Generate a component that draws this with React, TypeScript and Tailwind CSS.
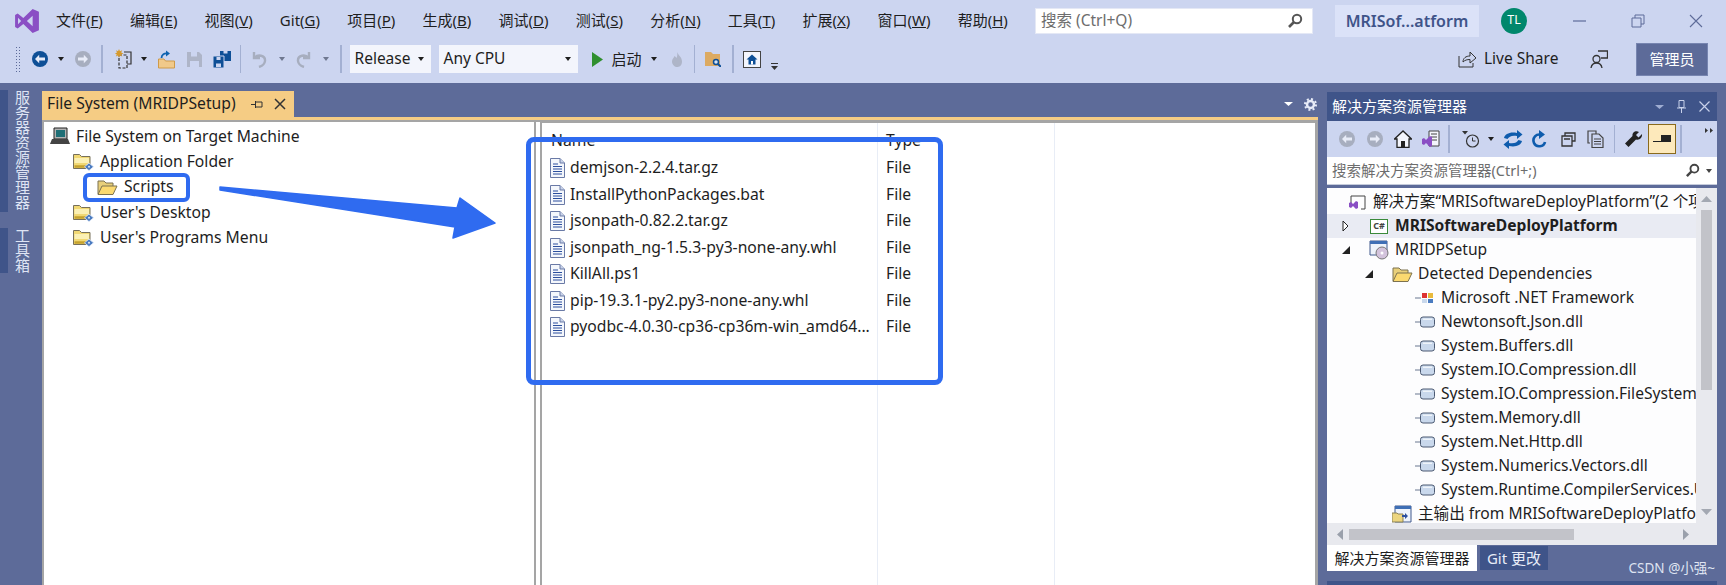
import React from "react";

function Caret({ color = "#1e1e1e", w = 7 }: { color?: string; w?: number }) {
  return (
    <svg width={w} height={4} viewBox="0 0 7 4" preserveAspectRatio="none" className="shrink-0">
      <path d="M0 0h7L3.500 4z" fill={color} />
    </svg>
  );
}

function Sep({ h = 28 }: { h?: number }) {
  return <div className="w-[1.500px] shrink-0 bg-[#a3b0d2]" style={{ height: h }} />;
}

function CircleArrow({ fill, dir = "left" }: { fill: string; dir?: "left" | "right" }) {
  return (
    <svg width={16} height={16} viewBox="0 0 16 16" className="shrink-0">
      <circle cx="8" cy="8" r="8" fill={fill} />
      {dir === "left" ? (
        <path d="M3 8l4.200-4.200v2.700H13v3H7.200v2.700z" fill="#e8ecf8" />
      ) : (
        <path d="M13 8L8.800 3.800v2.700H3v3h5.800v2.700z" fill="#e8ecf8" />
      )}
    </svg>
  );
}

function VsLogo({ size = 26 }: { size?: number }) {
  return (
    <svg width={size} height={size} viewBox="0 0 24 24">
      <path
        d="M17.200 1L23 3.400v17.200L17.200 23l-8.600-8.200L3.400 18.900 1 17.600V6.400l2.400-1.300 5.200 4.100zM17.200 7.200l-5.300 4.800 5.300 4.800zM3.700 9v6l2.900-3z"
        fill="#8a4fc4"
      />
    </svg>
  );
}

function FolderClosed() {
  return (
    <svg width={21} height={19} viewBox="0 0 21 19" className="shrink-0">
      <path d="M.5 2.500h6l2 2h8.500v12H.5z" fill="#f1d873" stroke="#77705a" />
      <path d="M1.500 6h14.500v5H1.500z" fill="#fbf0b4" />
      <path d="M1.500 14.500h14.500" stroke="#c5a22e" strokeWidth="2.500" />
      <path d="M16 11l4.500 3.800L16 18.600l-4.500-3.800z" fill="#4a7bc0" stroke="#e2eaf7" strokeWidth=".8" />
      <circle cx="16" cy="14.800" r="1" fill="#dfe9f7" />
    </svg>
  );
}

function FolderOpen() {
  return (
    <svg width={21} height={17} viewBox="0 0 21 17" className="shrink-0">
      <path d="M1 15V2h6l2 2h7v3" fill="#e8cf7a" stroke="#7c7250" />
      <path d="M1 15.500L5 7h15l-4 8.500z" fill="#fbd970" stroke="#7c7250" />
    </svg>
  );
}

function FileIcon() {
  return (
    <svg width={15} height={20} viewBox="0 0 15 20" className="shrink-0">
      <path d="M.5.500h9.500l4.500 4.500v14.500H.5z" fill="#f4f7fc" stroke="#6a7aa6" />
      <path d="M10 .5V5h4.500" fill="#c8d3ea" stroke="#6a7aa6" />
      <path d="M3 6h5M3 8.500h9M3 11h9M3 13.500h9M3 16h9" stroke="#2c4f9e" />
    </svg>
  );
}

function DllIcon() {
  return (
    <svg width={20} height={12} viewBox="0 0 20 12" className="shrink-0">
      <path d="M0 6h6" stroke="#9aa3b5" strokeWidth="1.500" />
      <rect x="5.500" y="1" width="14" height="10" rx="2.500" fill="#c9d8ec" stroke="#4c5a72" />
      <path d="M8 3.200h9" stroke="#fff" />
    </svg>
  );
}

function TreeRow({ text, indent, iconW, children }: { text: string; indent: number; iconW: number; children: React.ReactNode }) {
  return (
    <div className="flex h-[25.300px] items-center whitespace-nowrap" style={{ paddingLeft: indent }}>
      <div className="flex justify-start" style={{ width: iconW }}>
        {children}
      </div>
      <span>{text}</span>
    </div>
  );
}

function SolRow({ indent, text, bold, selected, arrow, children }: { indent: number; text: string; bold?: boolean; selected?: boolean; arrow?: "open" | "down"; children: React.ReactNode }) {
  return (
    <div className={`relative flex h-[24px] items-center whitespace-nowrap ${selected ? "bg-[#e9ebf3]" : ""} ${bold ? "font-bold" : ""}`} style={{ paddingLeft: indent }}>
      {arrow === "open" && (
        <svg width={7} height={12} viewBox="0 0 7 12" className="absolute" style={{ left: indent - 27 }}>
          <path d="M1 1l5 5-5 5z" fill="#fff" stroke="#222" />
        </svg>
      )}
      {arrow === "down" && (
        <svg width={8} height={8} viewBox="0 0 8 8" className="absolute" style={{ left: indent - 27 }}>
          <path d="M8 0v8H0z" fill="#222" />
        </svg>
      )}
      <div className="mr-[6px] flex w-[20px] shrink-0 justify-center">{children}</div>
      {text}
    </div>
  );
}

function MenuBar() {
  const items = ["文件(F)", "编辑(E)", "视图(V)", "Git(G)", "项目(P)", "生成(B)", "调试(D)", "测试(S)", "分析(N)", "工具(T)", "扩展(X)", "窗口(W)", "帮助(H)"];
  return (
    <div className="flex h-[41px] items-center">
      <div className="ml-[14px] w-[42px]">
        <VsLogo />
      </div>
      <div className="flex w-[979px] gap-[27.200px] text-[15px] text-[#1e1e1e]">
        {items.map((m) => {
          const i = m.indexOf("(");
          return (
            <span key={m} className="whitespace-nowrap">
              {m.slice(0, i)}({<span className="underline">{m[i + 1]}</span>})
            </span>
          );
        })}
      </div>
      <div className="flex h-[26px] w-[278px] items-center justify-between border border-[#e4e8f5] bg-white pr-[9px] pl-[5px] text-[15.500px] text-[#6d6d6d]">
        <span>搜索 (Ctrl+Q)</span>
        <svg width={16} height={16} viewBox="0 0 16 16">
          <circle cx="10" cy="6" r="4.200" fill="none" stroke="#555" strokeWidth="2" />
          <path d="M7 9l-5 5" stroke="#555" strokeWidth="2.600" />
        </svg>
      </div>
      <div className="ml-[22px] flex h-[32px] w-[144px] items-center justify-center bg-[#dbe2f8] text-[16px] font-semibold text-[#3f5489]">
        MRISof...atform
      </div>
      <div className="ml-[22px] flex h-[26px] w-[26px] items-center justify-center rounded-full bg-[#00876c] text-[12.500px] text-white">
        TL
      </div>
      <svg width={14} height={14} viewBox="0 0 14 14" className="ml-[46px]">
        <path d="M0 7h13" stroke="#5d6b99" strokeWidth="1.200" />
      </svg>
      <svg width={14} height={14} viewBox="0 0 14 14" className="ml-[44px]">
        <path d="M1 4h9v9H1zM4 4V1h9v9h-3" fill="none" stroke="#5d6b99" />
      </svg>
      <svg width={14} height={14} viewBox="0 0 14 14" className="ml-[44px]">
        <path d="M1 1l12 12M13 1L1 13" stroke="#5d6b99" strokeWidth="1.100" />
      </svg>
    </div>
  );
}

function ToolBar() {
  return (
    <div className="flex h-[36px] items-center text-[15.500px] text-[#1e1e1e]">
      <div className="ml-[15px] h-[26px] w-[6px] bg-[radial-gradient(#5d6b99_1px,transparent_1px)] bg-[length:3px_3px]" />
      <div className="ml-[11px]">
        <CircleArrow fill="#0e4f96" />
      </div>
      <div className="ml-[10px]">
        <Caret w={6} />
      </div>
      <div className="ml-[11px]">
        <CircleArrow fill="#a7aebf" dir="right" />
      </div>
      <div className="ml-[10px]">
        <Sep />
      </div>
      <svg width={17} height={20} viewBox="0 0 17 20" className="ml-[12px]">
        <path d="M4 6h8v13H4z" fill="none" stroke="#333" strokeDasharray="3 1.500" strokeWidth="1.200" />
        <path d="M9 3h7v12h-4" fill="none" stroke="#333" strokeWidth="1.200" />
        <path d="M4 0l1 2.200 2.200-1-1 2.200 2.200 1-2.200 1 1 2.200-2.200-1L4 8.800 3 6.600.800 7.600l1-2.200L0 4.400l2-1-1-2.200 2 1z" fill="#d69a2d" />
      </svg>
      <div className="ml-[9px]">
        <Caret w={6} />
      </div>
      <svg width={17} height={19} viewBox="0 0 17 19" className="ml-[11px]">
        <path d="M.5 9h5.500l1.500 2h9v7H.5z" fill="#f0c98a" stroke="#cf9a48" />
        <path d="M3.500 8c0-3.500 3-5 6-4.500" fill="none" stroke="#0e63b0" strokeWidth="1.800" />
        <path d="M8 .5l4 3-4 3z" fill="#0e63b0" />
      </svg>
      <svg width={15} height={15} viewBox="0 0 15 15" className="ml-[12px]">
        <path d="M0 0h12l3 3v12H0z" fill="#aeb5c8" />
        <path d="M4 0h6v4.500H4zM3 9h9v6H3z" fill="#ccd5f0" />
      </svg>
      <svg width={18} height={17} viewBox="0 0 18 17" className="ml-[11px]">
        <path d="M7 0h11v10H7z" fill="#0e4f96" />
        <path d="M0 5h11v12H0z" fill="#0e4f96" stroke="#ccd5f0" />
        <path d="M3.500 6h4v3h-4zM3 12.500h5V16H3zM10.500 0h4v2.500h-4z" fill="#ccd5f0" />
      </svg>
      <div className="ml-[9px]">
        <Sep />
      </div>
      <svg width={15} height={17} viewBox="0 0 15 17" className="ml-[11px]">
        <path d="M2 1v6h6M2.500 7c3-4 11-3 10.500 3-.3 3-3 5-6 6" fill="none" stroke="#a7aebf" strokeWidth="2.400" />
      </svg>
      <div className="ml-[12px]">
        <Caret w={6} color="#6f7890" />
      </div>
      <svg width={15} height={17} viewBox="0 0 15 17" className="ml-[11px]">
        <path d="M13 1v6H7M12.500 7C9.500 3 1.500 4 2 10c.3 3 3 5 6 6" fill="none" stroke="#a7aebf" strokeWidth="2.400" />
      </svg>
      <div className="ml-[12px]">
        <Caret w={6} color="#6f7890" />
      </div>
      <div className="ml-[11px]">
        <Sep />
      </div>
      <div className="ml-[8px] flex h-[28px] w-[81px] items-center justify-between bg-[#f3f5fc] pr-[7px] pl-[5px]">
        <span>Release</span>
        <Caret w={6} />
      </div>
      <div className="ml-[8px] flex h-[28px] w-[139px] items-center justify-between bg-[#f3f5fc] pr-[7px] pl-[5px]">
        <span>Any CPU</span>
        <Caret w={6} />
      </div>
      <svg width={13} height={15} viewBox="0 0 13 15" className="ml-[13px]">
        <path d="M1 0l11 7.500L1 15z" fill="#2f8f2f" />
      </svg>
      <span className="ml-[8px] text-[15px]">启动</span>
      <div className="ml-[9px]">
        <Caret w={6} />
      </div>
      <svg width={12} height={15} viewBox="0 0 12 15" className="ml-[14px]">
        <path d="M6 0c1 3 5 5 5 9.500S8 15 6 15s-5-2-5-5.500C1 7 3 6 3.500 4 4.500 5 5 5 5.500 6 6.500 4 6.500 2 6 0z" fill="#aeb5c8" />
      </svg>
      <div className="ml-[11px]">
        <Sep />
      </div>
      <svg width={16} height={16} viewBox="0 0 16 16" className="ml-[10px]">
        <path d="M0 1h6l2 2h7v12H0z" fill="#dcaa62" />
        <circle cx="11" cy="11" r="2.500" fill="#d5e3f5" stroke="#0e4f96" strokeWidth="1.500" />
        <path d="M13 13l3 3" stroke="#0e4f96" strokeWidth="2" />
      </svg>
      <div className="ml-[11px]">
        <Sep />
      </div>
      <svg width={18} height={17} viewBox="0 0 18 17" className="ml-[9px]">
        <rect x=".5" y=".5" width="17" height="16" fill="#f3f5fc" stroke="#444" />
        <path d="M9 3.500L3.500 8.500h2v5h7v-5h2z" fill="#0e4f96" />
        <path d="M8 10h2v3.500H8z" fill="#fff" />
      </svg>
      <div className="mt-[14px] ml-[10px] flex flex-col gap-[2px]">
        <div className="h-px w-[7px] bg-[#333]" />
        <Caret w={7} color="#333" />
      </div>
      <div className="flex-1" />
      <svg width={18} height={18} viewBox="0 0 18 18">
        <path d="M1 6v11h14v-4M5 12c0-4 3-6 7-6V2l6 6-6 5V9.500c-3 0-5 .5-7 2.500z" fill="none" stroke="#333" />
      </svg>
      <span className="ml-[8px] w-[73px] whitespace-nowrap">Live Share</span>
      <svg width={18} height={18} viewBox="0 0 18 18" className="ml-[33px]">
        <circle cx="6.500" cy="9" r="3.500" fill="none" stroke="#333" strokeWidth="1.300" />
        <path d="M1 18c.5-3 2.500-5 5.500-5s5 2 5.500 5M8 1h9.500v7H11" fill="none" stroke="#333" strokeWidth="1.300" />
      </svg>
      <div className="mr-[18px] ml-[28px] flex h-[33px] w-[72px] items-center justify-center border border-[#7785b0] bg-[#5d6b99] text-[15px] text-white">
        管理员
      </div>
    </div>
  );
}

function LeftStrip() {
  return (
    <div className="flex w-[42px] shrink-0 pt-[7px]">
      <div className="flex w-[8px] flex-col gap-[16px]">
        <div className="h-[122px] bg-[#3f5489]" />
        <div className="h-[45px] bg-[#3f5489]" />
      </div>
      <div className="ml-[6px] flex flex-col gap-[16px] text-[15px] leading-[16px] text-[#dfe4f4]">
        <div className="h-[122px] whitespace-nowrap [writing-mode:vertical-rl]">服务器资源管理器</div>
        <div className="h-[45px] whitespace-nowrap [writing-mode:vertical-rl]">工具箱</div>
      </div>
    </div>
  );
}

function DocWell() {
  const files = ["demjson-2.2.4.tar.gz", "InstallPythonPackages.bat", "jsonpath-0.82.2.tar.gz", "jsonpath_ng-1.5.3-py3-none-any.whl", "KillAll.ps1", "pip-19.3.1-py2.py3-none-any.whl", "pyodbc-4.0.30-cp36-cp36m-win_amd64..."];
  return (
    <div className="flex w-[1276px] shrink-0 flex-col pt-[8px]">
      <div className="flex items-center justify-between">
        <div className="flex h-[26px] w-[252px] items-center bg-[#f5cc84] pl-[5px] text-[15.700px] text-[#1e1e1e]">
          <span className="whitespace-nowrap">File System (MRIDPSetup)</span>
          <svg width={12} height={9} viewBox="0 0 12 9" className="ml-[15px] shrink-0">
            <path d="M0 4.500h4M4.500 1v7M4.500 2h6.500v5H4.500" fill="none" stroke="#333" />
          </svg>
          <svg width={12} height={12} viewBox="0 0 12 12" className="ml-[11px] shrink-0">
            <path d="M1 1l10 10M11 1L1 11" stroke="#333" strokeWidth="1.500" />
          </svg>
        </div>
        <div className="flex items-center gap-[11px] pr-[1px] text-white">
          <Caret color="#fff" w={9} />
          <svg width={13} height={13} viewBox="0 0 13 13">
            <circle cx="6.500" cy="6.500" r="3.500" fill="none" stroke="#e8ecf8" strokeWidth="2.500" />
            <circle cx="6.500" cy="6.500" r="5.500" fill="none" stroke="#e8ecf8" strokeWidth="2" strokeDasharray="2 2.300" />
          </svg>
        </div>
      </div>
      <div className="h-[3px] bg-[#f5cc84]" />
      <div className="flex flex-1 border-t-[2px] border-l-[2px] border-[#a5a5a5] bg-white text-[15.700px] text-[#1e1e1e]">
        <div className="w-[490px] shrink-0 pt-[2px]">
          <TreeRow text="File System on Target Machine" indent={6} iconW={26}>
            <svg width={20} height={19} viewBox="0 0 20 19">
              <path d="M4 1h13v11H4z" fill="#b4b4b4" stroke="#222" />
              <path d="M6 3h9v7H6z" fill="#1f6f76" />
              <path d="M2 12h16l2 5H0z" fill="#444" />
            </svg>
          </TreeRow>
          <TreeRow text="Application Folder" indent={29} iconW={27}>
            <FolderClosed />
          </TreeRow>
          <TreeRow text="Scripts" indent={53} iconW={27}>
            <FolderOpen />
          </TreeRow>
          <TreeRow text="User's Desktop" indent={29} iconW={27}>
            <FolderClosed />
          </TreeRow>
          <TreeRow text="User's Programs Menu" indent={29} iconW={27}>
            <FolderClosed />
          </TreeRow>
        </div>
        <div className="w-[8px] shrink-0 border-x-[2px] border-[#a5a5a5] bg-white" />
        <div className="flex flex-1 border-t border-[#a5a5a5]">
          <div className="w-[336px] shrink-0 border-r border-[#e8edf6] pl-[8px]">
            <div className="h-[32px] pt-[6px] pl-[1px]">Name</div>
            {files.map((f) => (
              <div key={f} className="flex h-[26.500px] items-center gap-[5px] whitespace-nowrap">
                <FileIcon />
                <span>{f}</span>
              </div>
            ))}
          </div>
          <div className="w-[177px] shrink-0 border-r border-[#e8edf6] pl-[8px]">
            <div className="h-[32px] pt-[6px]">Type</div>
            {files.map((f) => (
              <div key={f} className="flex h-[26.500px] items-center">
                File
              </div>
            ))}
          </div>
          <div className="flex-1 border-r-[3px] border-[#a5a5a5]" />
        </div>
      </div>
    </div>
  );
}

function SolutionExplorer() {
  const dlls = ["Newtonsoft.Json.dll", "System.Buffers.dll", "System.IO.Compression.dll", "System.IO.Compression.FileSystem.", "System.Memory.dll", "System.Net.Http.dll", "System.Numerics.Vectors.dll", "System.Runtime.CompilerServices.U"];
  return (
    <div className="ml-[9px] flex w-[390px] shrink-0 flex-col pt-[9px]">
      <div className="flex h-[29px] items-center justify-between bg-[#3f5489] pr-[7px] pl-[5px] text-[15px] text-white">
        <span>解决方案资源管理器</span>
        <div className="flex items-center gap-[13px]">
          <Caret color="#9fadd2" w={9} />
          <svg width={9} height={13} viewBox="0 0 9 13">
            <path d="M2 .5h5v7H2zM0 8h9M4.500 8v5" fill="none" stroke="#c8d1ea" />
          </svg>
          <svg width={11} height={11} viewBox="0 0 11 11">
            <path d="M.5.5l10 10M10.500.5l-10 10" stroke="#c8d1ea" strokeWidth="1.200" />
          </svg>
        </div>
      </div>
      <div className="flex h-[36px] items-center bg-[#ccd5f0] pl-[12px]">
        <CircleArrow fill="#a7aebf" />
        <div className="ml-[12px]">
          <CircleArrow fill="#a7aebf" dir="right" />
        </div>
        <svg width={18} height={18} viewBox="0 0 18 18" className="ml-[11px]">
          <path d="M9 1L.5 9H3v8.500h12V9h2.500z" fill="#f3f5fc" stroke="#222" strokeWidth="1.300" />
          <path d="M7 11h4v6.500H7z" fill="#222" />
        </svg>
        <svg width={18} height={18} viewBox="0 0 18 18" className="ml-[10px]">
          <path d="M7 1h10v15H7z" fill="#f3f5fc" stroke="#444" />
          <path d="M9 4h6M9 7h6M9 10h6" stroke="#444" />
          <path d="M0 9l2-1 2 2 4-4 2 1v9l-2 1-4-4-2 2-2-1z" fill="#8a4fc4" />
        </svg>
        <div className="ml-[8px]">
          <Sep />
        </div>
        <svg width={18} height={18} viewBox="0 0 18 18" className="ml-[12px]">
          <circle cx="10.500" cy="11" r="6" fill="none" stroke="#333" strokeWidth="1.200" />
          <path d="M10.500 7.500V11h3" fill="none" stroke="#333" />
          <path d="M0 1h6L3 4.500z" fill="#333" />
        </svg>
        <div className="ml-[8px]">
          <Caret w={6} />
        </div>
        <svg width={20} height={19} viewBox="0 0 20 19" className="ml-[9px]">
          <path d="M1 8c1-4 6-6.500 13-5V0l5.500 4.500L14 9V6C9 5 6 6.500 4.500 9zM19 11c-1 4-6 6.500-13 5v3L.5 14.500 6 10v3c5 1 8-.5 9.500-3z" fill="#0e5cad" />
        </svg>
        <svg width={16} height={18} viewBox="0 0 16 18" className="ml-[8px]">
          <path d="M11 5c-6-2-10 3-8 8s10 4 11-1" fill="none" stroke="#0e5cad" strokeWidth="2.600" />
          <path d="M8 0v9l6-4.500z" fill="#0e5cad" />
        </svg>
        <svg width={15} height={15} viewBox="0 0 15 15" className="ml-[14px]">
          <path d="M4 4V1h10v8h-3M1 4h10v10H1zM3 7h6" fill="none" stroke="#333" strokeWidth="1.300" />
        </svg>
        <svg width={18} height={18} viewBox="0 0 18 18" className="ml-[11px]">
          <path d="M3 13H1V1h8v3M5 4h7l4 4v9.500H5zM7 9h7M7 11.500h7M7 14h7" fill="none" stroke="#444" strokeWidth="1.200" />
        </svg>
        <div className="ml-[9px]">
          <Sep />
        </div>
        <svg width={18} height={18} viewBox="0 0 18 18" className="ml-[10px]">
          <path d="M17 4l-3.500 3.500L11 5l3-3c-3-2-7 0-6.500 4L0 13.500 3.500 17 11 9.500c3.500 1 6.500-2 6-5.500z" fill="#222" />
        </svg>
        <div className="ml-[5px] flex h-[30px] w-[28px] items-center justify-center border border-[#8a6a1c] bg-[#fde9bb]">
          <svg width={18} height={8} viewBox="0 0 18 8">
            <path d="M0 6.500h18" stroke="#222" />
            <path d="M8 0h10v6H8z" fill="#222" />
          </svg>
        </div>
        <div className="ml-[4px]">
          <Sep />
        </div>
        <div className="mr-[4px] mb-[18px] ml-auto flex gap-[2px]">
          <svg width={3} height={5} viewBox="0 0 3 5">
            <path d="M0 0l3 2.500L0 5z" fill="#333" />
          </svg>
          <svg width={3} height={5} viewBox="0 0 3 5">
            <path d="M0 0l3 2.500L0 5z" fill="#333" />
          </svg>
        </div>
      </div>
      <div className="flex h-[28px] items-center justify-between border-b border-[#c5cbdb] bg-white pr-[5px] pl-[5px] text-[14.500px] text-[#6d6d6d]">
        <span>搜索解决方案资源管理器(Ctrl+;)</span>
        <div className="flex items-center gap-[6px]">
          <svg width={15} height={15} viewBox="0 0 16 16">
            <circle cx="10" cy="6" r="4.200" fill="none" stroke="#444" strokeWidth="2" />
            <path d="M7 9l-5 5" stroke="#444" strokeWidth="2.600" />
          </svg>
          <Caret w={6} color="#444" />
        </div>
      </div>
      <div className="mt-[3px] flex h-[335px] bg-white">
        <div className="flex-1 overflow-hidden bg-[#fdfdfe] pt-[2px] text-[15.600px] text-[#1e1e1e]">
          <SolRow indent={20} text="解决方案“MRISoftwareDeployPlatform”(2 个项目)">
            <svg width={17} height={15} viewBox="0 0 17 15">
              <path d="M2 8V1h14v13h-4" fill="none" stroke="#444" />
              <path d="M0 8l2-1 2 2 3-3 2 1v6l-2 1-3-3-2 2-2-1z" fill="#8a4fc4" />
            </svg>
          </SolRow>
          <SolRow indent={42} text="MRISoftwareDeployPlatform" bold selected arrow="open">
            <div className="flex h-[15px] w-[18px] items-center justify-center border border-[#3a8a3a] bg-white text-[9px] font-bold text-[#444]">
              C#
            </div>
          </SolRow>
          <SolRow indent={42} text="MRIDPSetup" arrow="down">
            <svg width={20} height={20} viewBox="0 0 20 20">
              <path d="M1 1h17v14H1z" fill="#eef3fb" stroke="#41598c" />
              <path d="M1 1h17v3H1z" fill="#3f6fb5" />
              <circle cx="13" cy="13" r="6" fill="#d3c3dc" stroke="#777" />
              <circle cx="13" cy="13" r="1.500" fill="#fff" />
            </svg>
          </SolRow>
          <SolRow indent={65} text="Detected Dependencies" arrow="down">
            <FolderOpen />
          </SolRow>
          <div className="flex h-[24px] items-center whitespace-nowrap pl-[88px]">
            <svg width={20} height={12} viewBox="0 0 20 12" className="mr-[6px] shrink-0">
              <path d="M0 6h6" stroke="#9aa3b5" strokeWidth="1.500" />
              <path d="M7 1h5v5H7z" fill="#d33" />
              <path d="M13 1h5v5h-5z" fill="#e8b93c" />
              <path d="M7 7h5v4H7z" fill="#c9d8ec" />
              <path d="M13 7h5v4h-5z" fill="#4a7bc0" />
            </svg>
            Microsoft .NET Framework
          </div>
          {dlls.map((d) => (
            <div key={d} className="flex h-[24px] items-center whitespace-nowrap pl-[88px]">
              <div className="mr-[6px]">
                <DllIcon />
              </div>
              {d}
            </div>
          ))}
          <SolRow indent={65} text="主输出 from MRISoftwareDeployPlatform">
            <svg width={20} height={19} viewBox="0 0 20 19">
              <path d="M3 1h16v16H3z" fill="#eef3fb" stroke="#41598c" />
              <path d="M3 1h16v3H3z" fill="#3f6fb5" />
              <path d="M0 8h5l1 1h5v8H0z" fill="#ecd57f" stroke="#8a8158" />
              <path d="M13 8l3 3-3 3zM10 10h3v2h-3z" fill="#2c4f9e" />
            </svg>
          </SolRow>
        </div>
        <div className="flex w-[21px] shrink-0 flex-col items-center bg-[#e8e9ee] pt-[8px] pb-[8px]">
          <svg width={11} height={6} viewBox="0 0 11 6">
            <path d="M5.500 0L11 6H0z" fill="#a3a8b2" />
          </svg>
          <div className="mt-[8px] h-[180px] w-[11px] bg-[#c2c3c9]" />
          <div className="flex-1" />
          <svg width={11} height={6} viewBox="0 0 11 6">
            <path d="M5.500 6L11 0H0z" fill="#a3a8b2" />
          </svg>
        </div>
      </div>
      <div className="flex h-[22px] items-center bg-[#e8e9ee] pr-[28px] pl-[10px]">
        <svg width={6} height={11} viewBox="0 0 6 11">
          <path d="M0 5.500L6 0v11z" fill="#9aa0ab" />
        </svg>
        <div className="ml-[6px] h-[11px] w-[225px] bg-[#c2c3c9]" />
        <div className="flex-1" />
        <svg width={6} height={11} viewBox="0 0 6 11">
          <path d="M6 5.500L0 0v11z" fill="#9aa0ab" />
        </svg>
      </div>
      <div className="flex h-[36px] items-start text-[15px]">
        <div className="flex h-[26px] w-[150px] items-center justify-center bg-white text-[#1e1e1e]">解决方案资源管理器</div>
        <div className="mt-[1px] ml-[3px] flex h-[24px] w-[68px] items-center justify-center bg-[#3f5489] text-[#e8ecf8]">Git 更改</div>
        <div className="mt-[16px] mr-[2px] ml-auto text-[13.500px] leading-[14px] text-[#dfe4f2]">CSDN @小强~</div>
      </div>
      <div className="h-[4px] bg-[#3f5489]" />
    </div>
  );
}

export default function App() {
  return (
    <div
      className="relative h-[585px] w-[1726px] overflow-hidden bg-[#5d6b99]"
      style={{ fontFamily: '"Noto Sans", "Noto Sans CJK SC", sans-serif' }}
    >
      <div className="h-[83px] bg-[#ccd5f0]">
        <MenuBar />
        <ToolBar />
      </div>
      <div className="flex h-[502px]">
        <LeftStrip />
        <DocWell />
        <SolutionExplorer />
      </div>

      {/* blue marks drawn on top of the capture */}
      <div className="absolute top-[173px] left-[83px] h-[29px] w-[107px] rounded-[6px] border-[4px] border-[#2f6bf0]" />
      <div className="absolute top-[137px] left-[526px] h-[248px] w-[417px] rounded-[8px] border-[5px] border-[#2f6bf0]" />
      <svg width={300} height={60} viewBox="0 0 300 60" className="absolute top-[183px] left-[210px]">
        <path d="M10 4L247 25 250 15 285 40 243 55 245 44 10 7z" fill="#2f6bf0" stroke="#2f6bf0" strokeLinejoin="round" strokeWidth="1.500" />
      </svg>
    </div>
  );
}
